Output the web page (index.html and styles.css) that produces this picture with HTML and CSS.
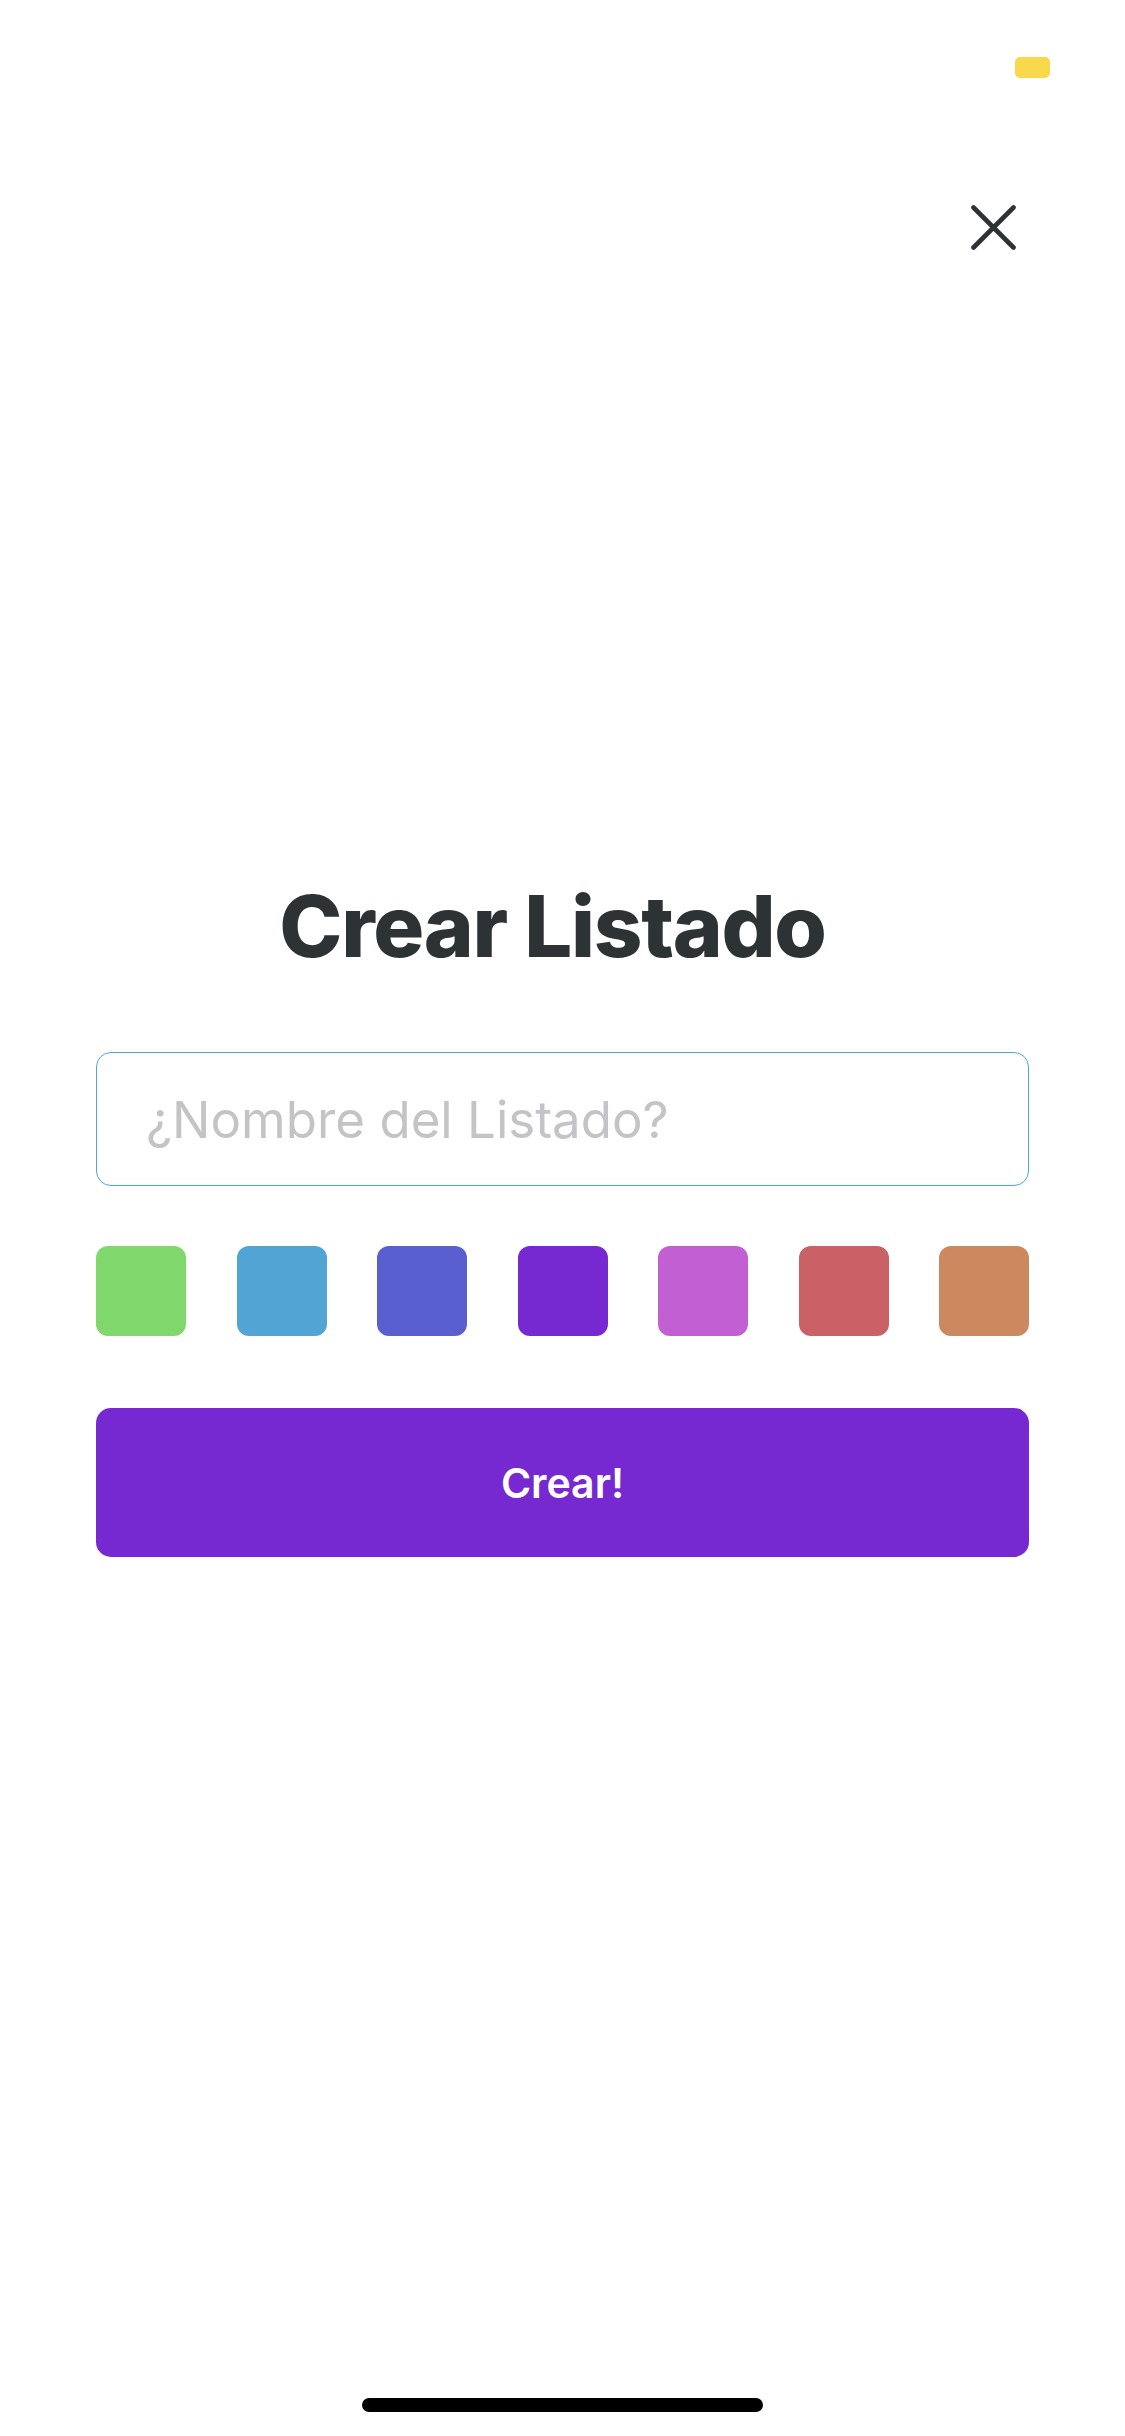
FILE: index.html
```html
<!DOCTYPE html>
<html lang="es">
<head>
<meta charset="utf-8">
<title>Crear Listado</title>
<link rel="stylesheet" href="styles.css">
</head>
<body>
<div class="page">
  <div class="status-bar">
    <span class="battery"></span>
  </div>
  <div class="close-row">
    <button class="close-btn" aria-label="Cerrar">
      <svg width="45" height="45" viewBox="0 0 45 45">
        <path d="M2.5 2.5 L42.5 42.5 M42.5 2.5 L2.5 42.5" stroke="#2d3235" stroke-width="4.6" stroke-linecap="round" fill="none"/>
      </svg>
    </button>
  </div>
  <main class="form">
    <h1 class="title">Crear Listado</h1>
    <input class="name-input" type="text" placeholder="¿Nombre del Listado?">
    <div class="swatches">
      <span class="swatch green"></span>
      <span class="swatch blue"></span>
      <span class="swatch indigo"></span>
      <span class="swatch purple"></span>
      <span class="swatch orchid"></span>
      <span class="swatch red"></span>
      <span class="swatch orange"></span>
    </div>
    <button class="create-btn">Crear!</button>
  </main>
  <div class="home-indicator"></div>
</div>
</body>
</html>
```
FILE: styles.css
```css
* { box-sizing: border-box; }
html, body {
  margin: 0;
  padding: 0;
  background: #ffffff;
}
body {
  font-family: Inter, "Noto Sans", sans-serif;
}
.page {
  width: 1125px;
  height: 2436px;
  display: flex;
  flex-direction: column;
}
.status-bar {
  height: 100px;
  display: flex;
  justify-content: flex-end;
  align-items: flex-start;
  padding: 57px 75px 0 0;
}
.battery {
  width: 35px;
  height: 21px;
  border-radius: 5px;
  background: #f9d84c;
}
.close-row {
  display: flex;
  justify-content: flex-end;
  padding: 0 109px 0 0;
  margin-top: 105px;
}
.close-btn {
  border: 0;
  background: none;
  padding: 0;
  width: 45px;
  height: 45px;
  display: block;
}
.close-btn svg { display: block; }
.form {
  padding: 0 96px;
  display: flex;
  flex-direction: column;
}
.title {
  margin: 626px 0 0 0;
  padding-right: 20px;
  font-size: 85px;
  line-height: 102px;
  font-weight: 800;
  color: #2d3235;
  text-align: center;
  letter-spacing: -1.3px;
}
.name-input {
  margin-top: 74px;
  height: 134px;
  width: 100%;
  border: 1.5px solid #4fa6dc;
  border-radius: 15px;
  padding: 0 0 0 49px;
  font-family: Inter, "Noto Sans", sans-serif;
  font-size: 51px;
  color: #2d3235;
  outline: none;
}
.name-input::placeholder {
  color: #c4c4c6;
}
.swatches {
  margin-top: 60px;
  display: flex;
  justify-content: space-between;
}
.swatch {
  width: 90px;
  height: 90px;
  border-radius: 12px;
}
.green { background: #80d76c; }
.blue { background: #51a4d4; }
.indigo { background: #5a5fd0; }
.purple { background: #7629d0; }
.orchid { background: #c260d3; }
.red { background: #c96166; }
.orange { background: #cc8960; }
.create-btn {
  margin-top: 72px;
  height: 149px;
  width: 100%;
  border: 0;
  border-radius: 15px;
  background: #7629d0;
  color: #ffffff;
  font-family: Inter, "Noto Sans", sans-serif;
  font-size: 41px;
  font-weight: 600;
}
.home-indicator {
  margin: auto auto 24px auto;
  width: 401px;
  height: 14px;
  border-radius: 7px;
  background: #000000;
}
```
